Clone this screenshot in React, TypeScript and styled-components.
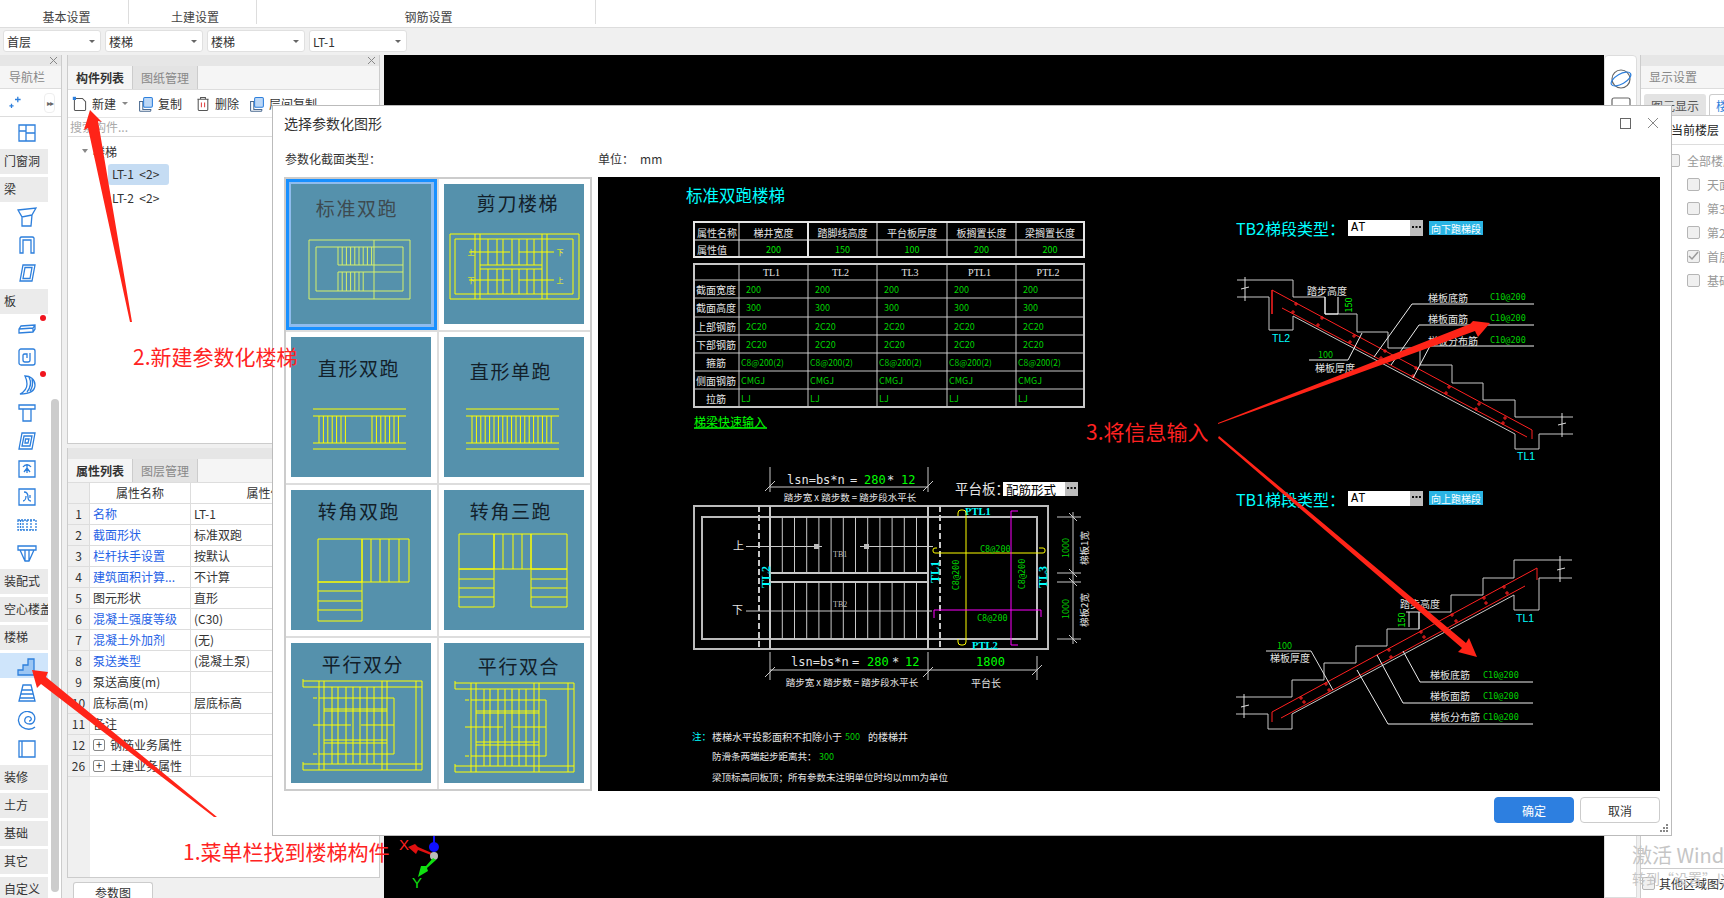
import React from "react";
import styled, { createGlobalStyle } from "styled-components";

const CJK = `"Noto Sans CJK SC", "Liberation Sans", sans-serif`;
const MONO = `'DejaVu Sans Mono', monospace`;
const SERIF = `'Liberation Serif', serif`;
const BLUE = "#2d7fdc";

const Global = createGlobalStyle`
  html, body { margin: 0; padding: 0; height: 100%; overflow: hidden; background: #f0f0f0; }
  #root { height: 100%; }
  * { box-sizing: border-box; }
`;

const Page = styled.div`
  position: relative;
  width: 1724px;
  height: 898px;
  overflow: hidden;
  display: flex;
  flex-direction: column;
  font-family: ${CJK};
  font-size: 12px;
  color: #333;
  background: #f0f0f0;
`;

/* ---------- top ---------- */
const TopTabs = styled.div`
  display: flex;
  height: 28px;
  background: #fff;
  border-bottom: 1px solid #ddd;
`;
const TopTab = styled.div<{ $w: number }>`
  width: ${(p) => p.$w}px;
  height: 24px;
  padding: 8px 0 0 5px;
  line-height: 17px;
  text-align: center;
  border-right: 1px solid #ddd;
  color: #444;
`;
const SelectBar = styled.div`
  display: flex;
  gap: 4px;
  height: 27px;
  padding: 2px 0 0 3px;
  background: #f0f0f0;
`;
const SelectBox = styled.div`
  width: 98px;
  height: 22px;
  padding: 0 3px;
  display: flex;
  align-items: center;
  justify-content: space-between;
  background: #fff;
  border: 1px solid #e0e0e0;
  border-radius: 3px;
  &::after {
    content: "";
    margin-right: 2px;
    border-left: 3px solid transparent;
    border-right: 3px solid transparent;
    border-top: 3px solid #666;
  }
`;

const Main = styled.div`
  flex: 1;
  display: flex;
  min-height: 0;
`;

/* ---------- left navigation ---------- */
const NavPanel = styled.div`
  position: relative;
  width: 62px;
  margin-right: 5px;
  flex: none;
  background: #fff;
  border-right: 1px solid #ccc;
  overflow: hidden;
`;
const CloseBarWrap = styled.div`
  height: 11px;
  flex: none;
  background: #e6e6e6;
  display: flex;
  justify-content: flex-end;
  align-items: center;
  padding-right: 4px;
`;
const CloseBar = ({ x }: { x?: boolean }) => (
  <CloseBarWrap>
    {x && (
      <svg width="7" height="7" viewBox="0 0 7 7" fill="none" stroke="#888">
        <path d="M0 0l7 7M7 0L0 7" />
      </svg>
    )}
  </CloseBarWrap>
);
const NavTitle = styled.div`
  height: 23px;
  padding-left: 9px;
  line-height: 22px;
  color: #888;
  background: #f5f5f5;
  border-bottom: 1px solid #ddd;
`;
const NavTools = styled.div`
  height: 28px;
  display: flex;
  align-items: center;
  justify-content: space-between;
  padding: 1px 6px 0 8px;
  border-bottom: 1px solid #ddd;
`;
const MoreBtn = styled.div`
  width: 11px;
  height: 20px;
  font-size: 8px;
  letter-spacing: -1px;
  line-height: 18px;
  text-align: center;
  color: #666;
  border: 1px solid #eee;
  border-radius: 4px;
`;
const NavList = styled.div`
  display: flex;
  flex-direction: column;
  width: 48px;
  padding-top: 2px;
`;
const NavHead = styled.div`
  flex: none;
  height: 25px;
  margin: 2px 0 1px;
  padding-left: 4px;
  line-height: 24px;
  font-size: 12px;
  white-space: nowrap;
  overflow: hidden;
  background: #ebebeb;
  color: #333;
`;
const NavIconRow = styled.div<{ $sel?: boolean }>`
  flex: none;
  position: relative;
  height: ${(p) => (p.$sel ? 25 : 28)}px;
  margin: ${(p) => (p.$sel ? "2px 0 1px" : 0)};
  display: flex;
  align-items: center;
  justify-content: center;
  padding-left: 6px;
  background: ${(p) => (p.$sel ? "#cfe5fb" : "transparent")};
`;
const RedDot = styled.span`
  position: absolute;
  right: 2px;
  top: 0;
  width: 6px;
  height: 6px;
  border-radius: 50%;
  background: #f0141e;
`;
const NavScroll = styled.div`
  position: absolute;
  left: 51px;
  top: 344px;
  width: 8px;
  height: 493px;
  border-radius: 4px;
  background: #ccc;
`;

/* ---------- list + props column ---------- */
const MidColumn = styled.div`
  width: 313px;
  flex: none;
  display: flex;
  flex-direction: column;
  margin-right: 4px;
`;
const ListPanel = styled.div`
  height: 389px;
  flex: none;
  display: flex;
  flex-direction: column;
  background: #fff;
  border: 1px solid #ccc;
  border-top: 0;
`;
const PanelTabs = styled.div`
  display: flex;
  height: 24px;
  flex: none;
  background: #f5f5f5;
  border-bottom: 1px solid #ddd;
`;
const PanelTab = styled.div<{ $on?: boolean }>`
  width: 65px;
  line-height: 23px;
  text-align: center;
  font-weight: ${(p) => (p.$on ? 700 : 400)};
  color: ${(p) => (p.$on ? "#333" : "#888")};
  background: ${(p) => (p.$on ? "#f5f5f5" : "#e3e3e3")};
  border-right: 1px solid #ccc;
`;
const ListTools = styled.div`
  height: 28px;
  flex: none;
  display: flex;
  align-items: center;
  padding-left: 4px;
  border-bottom: 1px solid #e6e6e6;
`;
const ToolBtn = styled.div<{ $mr: number }>`
  display: flex;
  align-items: center;
  gap: 4px;
  margin-right: ${(p) => p.$mr}px;
  white-space: nowrap;
`;
const Caret = styled.span`
  margin-left: 2px;
  border-left: 3px solid transparent;
  border-right: 3px solid transparent;
  border-top: 3px solid #888;
`;
const SearchRow = styled.div`
  height: 19px;
  flex: none;
  padding-left: 2px;
  line-height: 18px;
  color: #aaa;
  border-bottom: 1px solid #ddd;
`;
const Tree = styled.div`
  display: flex;
  flex-direction: column;
  padding: 2px 0 0 14px;
`;
const TreeRoot = styled.div`
  height: 24px;
  margin-bottom: 1px;
  display: flex;
  align-items: center;
  gap: 5px;
  &::before {
    content: "";
    border-left: 3px solid transparent;
    border-right: 3px solid transparent;
    border-top: 4px solid #888;
  }
`;
const TreeItem = styled.div<{ $on?: boolean }>`
  width: 61px;
  height: 21px;
  margin: 0 0 3px 26px;
  padding-left: 4px;
  line-height: 20px;
  white-space: pre;
  border-radius: 3px;
  background: ${(p) => (p.$on ? "#c5dcf3" : "transparent")};
`;
const PropsPanel = styled.div`
  margin-top: 4px;
  height: 430px;
  flex: none;
  display: flex;
  flex-direction: column;
  background: #fff;
  border: 1px solid #ccc;
  border-top: 0;
`;
const PropsGrid = styled.div`
  flex: 1;
  display: grid;
  grid-template-columns: 22px 101px 148px 1fr;
  grid-auto-rows: 21px;
  align-content: start;
  background: linear-gradient(to right, #f0f0f0 22px, #fff 22px);
`;
const PCell = styled.div<{ $blue?: boolean; $head?: boolean; $num?: boolean }>`
  padding-left: ${(p) => (p.$num || p.$head ? 0 : 3)}px;
  line-height: 20px;
  text-align: ${(p) => (p.$num || p.$head ? "center" : "left")};
  white-space: nowrap;
  overflow: hidden;
  border-right: 1px solid #ddd;
  border-bottom: 1px solid #ddd;
  color: ${(p) => (p.$blue ? "#1f62e6" : "#333")};
  background: ${(p) => (p.$num ? "#f0f0f0" : "#fff")};
  display: flex;
  align-items: center;
  justify-content: ${(p) => (p.$num || p.$head ? "center" : "flex-start")};
  gap: 5px;
`;
const PlusBox = styled.span`
  width: 12px;
  height: 12px;
  flex: none;
  border: 1px solid #888;
  border-radius: 2px;
  line-height: 9px;
  text-align: center;
  font-size: 11px;
`;
const BottomTabs = styled.div`
  flex: 1;
  padding: 4px 0 0 6px;
`;
const ParamTab = styled.div`
  width: 80px;
  height: 17px;
  line-height: 20px;
  overflow: visible;
  text-align: center;
  background: #fff;
  border: 1px solid #ccc;
  border-bottom: 0;
  border-radius: 3px 3px 0 0;
`;

/* ---------- canvas + right ---------- */
const Canvas = styled.div`
  position: relative;
  flex: 1;
  background: #000;
`;
const Gizmo = styled.svg`
  position: absolute;
  left: 1px;
  top: 775px;
`;
const Strip = styled.div`
  width: 33px;
  flex: none;
  margin-right: 3px;
  padding-top: 11px;
  display: flex;
  flex-direction: column;
  align-items: center;
  gap: 6px;
  background: #fff;
  border: 1px solid #ddd;
  border-radius: 4px 4px 0 0;
`;
const RightPanel = styled.div`
  position: relative;
  width: 84px;
  flex: none;
  display: flex;
  flex-direction: column;
  background: #fff;
  border-left: 1px solid #ccc;
  overflow: hidden;
`;
const RightHead = styled.div`
  height: 23px;
  flex: none;
  padding-left: 8px;
  line-height: 22px;
  color: #888;
  background: #f5f5f5;
  border-bottom: 1px solid #ddd;
`;
const RightTabs = styled.div`
  height: 27px;
  flex: none;
  display: flex;
  gap: 3px;
  padding: 5px 0 0 3px;
  border-bottom: 1px solid #ccc;
`;
const RightTab = styled.div<{ $on?: boolean }>`
  width: 62px;
  flex: none;
  line-height: 22px;
  text-align: center;
  white-space: nowrap;
  color: ${(p) => (p.$on ? BLUE : "#555")};
  background: ${(p) => (p.$on ? "#fff" : "#e3e3e3")};
  border: 1px solid ${(p) => (p.$on ? "#ccc" : "#e3e3e3")};
  border-bottom: 0;
  border-radius: 3px 3px 0 0;
`;
const FloorHead = styled.div`
  height: 29px;
  flex: none;
  padding-left: 30px;
  line-height: 28px;
  color: #222;
  border-bottom: 1px solid #ddd;
  white-space: nowrap;
`;
const FloorList = styled.div`
  padding: 8px 0 0 46px;
  display: flex;
  flex-direction: column;
  gap: 10px;
`;
const FloorRow = styled.div<{ $root?: boolean }>`
  height: 14px;
  margin-left: ${(p) => (p.$root ? -20 : 0)}px;
  display: flex;
  align-items: center;
  gap: 7px;
  color: #999;
  white-space: nowrap;
`;
const CheckBox = styled.span`
  width: 13px;
  height: 13px;
  flex: none;
  border: 1px solid #b5b5b5;
  border-radius: 2px;
  background: #f0f0f0;
  display: flex;
  align-items: center;
  justify-content: center;
`;
const OtherRow = styled.div`
  margin-top: auto;
  height: 30px;
  display: flex;
  align-items: center;
  gap: 4px;
  padding: 0 0 0 1px;
  color: #333;
  border-top: 1px solid #ccc;
  white-space: nowrap;
`;
const Watermark = styled.div`
  position: absolute;
  left: 1632px;
  top: 842px;
  color: #c5c5c5;
  font-size: 20px;
  line-height: 26px;
  white-space: nowrap;
  z-index: 5;
  & > small {
    display: block;
    font-size: 14px;
    line-height: 20px;
  }
`;

/* ---------- dialog ---------- */
const Dialog = styled.div`
  position: absolute;
  left: 272px;
  top: 105px;
  width: 1400px;
  height: 731px;
  display: flex;
  flex-direction: column;
  padding: 0 11px 0 11px;
  background: #fff;
  border: 1px solid #bbb;
  z-index: 3;
`;
const DialogHead = styled.div`
  flex: none;
  height: 38px;
  display: flex;
  align-items: center;
  justify-content: space-between;
  font-size: 14px;
  color: #333;
  padding: 0 0 4px 0;
`;
const WinBtns = styled.div`
  display: flex;
  align-items: center;
  gap: 16px;
  margin-right: 1px;
`;
const UnitRow = styled.div`
  flex: none;
  height: 33px;
  display: flex;
  align-items: center;
  font-size: 12px;
  color: #333;
  padding: 0 0 4px 1px;
`;
const UnitLabel = styled.span`
  margin-left: 217px;
  width: 42px;
`;
const DialogBody = styled.div`
  flex: none;
  display: flex;
  gap: 6px;
  height: 614px;
`;
const Grid = styled.div`
  width: 308px;
  height: 614px;
  flex: none;
  display: grid;
  grid-template-columns: 153px 151px;
  grid-template-rows: 153px 153px 153px 151px;
  background: #fff;
  border: 2px solid #ccc;
`;
const ThumbCell = styled.div<{ $col: number; $row: number }>`
  border-right: ${(p) => (p.$col === 0 ? "2px solid #ddd" : "0")};
  border-bottom: ${(p) => (p.$row < 3 ? "2px solid #ddd" : "0")};
`;
const ThumbFrame = styled.div<{ $sel?: boolean }>`
  width: 151px;
  height: 151px;
  padding: ${(p) => (p.$sel ? 2 : 5)}px;
  border: ${(p) => (p.$sel ? "3px solid #1890ff" : "0")};
  background: ${(p) => (p.$sel ? "#8fbcee" : "#fff")};
`;
const ThumbSvg = styled.svg`
  display: block;
  background: #5591ac;
`;
const ThumbTitle = styled.text<{ $dim?: boolean }>`
  font-family: ${CJK};
  font-size: 19px;
  letter-spacing: 1.6px;
  text-anchor: middle;
  fill: ${(p) => (p.$dim ? "#3d4a50" : "#12202a")};
`;
const ThumbMark = styled.text`
  font-family: ${CJK};
  font-size: 7px;
  text-anchor: middle;
  fill: #ffff00;
`;
const Drawing = styled.svg`
  display: block;
  flex: none;
  background: #000;
`;
const CadText = styled.text<{ $c?: string; $s?: number; $b?: boolean; $a?: string; $f?: string }>`
  font-family: ${(p) => p.$f || CJK};
  font-size: ${(p) => p.$s || 10}px;
  font-weight: ${(p) => (p.$b ? 700 : 400)};
  fill: ${(p) => p.$c || "#e4e4e4"};
  text-anchor: ${(p) => p.$a || "start"};
  dominant-baseline: central;
`;
const DialogFoot = styled.div`
  flex: 1;
  display: flex;
  justify-content: flex-end;
  align-items: flex-start;
  gap: 6px;
  padding: 6px 0 0;
`;
const Btn = styled.button<{ $primary?: boolean }>`
  width: 80px;
  height: 26px;
  padding: 0;
  font-family: ${CJK};
  font-size: 12px;
  border-radius: 4px;
  color: ${(p) => (p.$primary ? "#fff" : "#333")};
  background: ${(p) => (p.$primary ? "#2d7fe0" : "#fff")};
  border: 1px solid ${(p) => (p.$primary ? "#2d7fe0" : "#ccc")};
`;
const Grip = styled.svg`
  position: absolute;
  right: 2px;
  bottom: 2px;
`;

/* ---------- annotations ---------- */
const Arrows = styled.svg`
  position: absolute;
  left: 0;
  top: 0;
  z-index: 6;
  pointer-events: none;
`;
const Note = styled.div<{ $x: number; $y: number }>`
  position: absolute;
  left: ${(p) => p.$x}px;
  top: ${(p) => p.$y}px;
  z-index: 7;
  font-size: 21px;
  line-height: 28px;
  color: #ff2222;
  white-space: nowrap;
`;

/* ---------- small icons ---------- */
const S = (p: React.SVGProps<SVGSVGElement> & { size?: number }) => {
  const { size = 20, children, ...rest } = p;
  return (
    <svg width={size} height={size} viewBox="0 0 20 20" fill="none" stroke={BLUE} strokeWidth={1.3} {...rest}>
      {children}
    </svg>
  );
};
const icons: Record<string, React.ReactNode> = {
  window: <path d="M2 2h16v16H2zM9 2v16M9 10h9M2 8h7" />,
  wall: <path d="M1 3l18-2-4 7-1 11H5V10zM1 3l4 7 10-2M5 10v9" />,
  door: <path d="M3 18V3a2 2 0 0 1 2-1h10a2 2 0 0 1 2 1v15h-3V5H6v13z" />,
  slab: <path d="M6 2h12l-3 16H3zM8 4.500h7l-2 11H6z" />,
  plate: <path d="M2 10l2-3 14-1v4l-2 3-14 1zM2 10l14-1 2-3M16 9v4" />,
  spiral: <path d="M4 2h12a2 2 0 0 1 2 2v12a2 2 0 0 1-2 2H4a2 2 0 0 1-2-2V4a2 2 0 0 1 2-2zM13 6v7a2 2 0 0 1-2 2H8a2 2 0 0 1-2-2V8a2 2 0 0 1 2-1h2v4" />,
  arc: <path d="M8 1c5 0 10 3 10 9s-6 9-15 9c4-2 7-5 7-10 0-3-1-6-2-8zM12 2c2 4 2 10-2 15M15 4c1 4 1 8-2 12" />,
  column: <path d="M2 2h16v4H2zM6 6h8v12H6z" />,
  doubleSq: <path d="M5 2h13l-3 16H2zM7 5h8l-2 10H5zM8.500 8h3.500l-1 4H8z" />,
  up: <path d="M2 2h16v16H2zM6 8c2-3 6-3 8 0M10 5v9M7 13l3-4 3 4" />,
  down: <path d="M2 2h16v16H2zM7 5c3 0 4 2 4 5s1 4 3 4M6 14c2 0 3-3 3-5M13 8v3" />,
  beams: <path d="M1 5h18v10H1zM6 5v10M10 5v10M14 5v10M3.500 5v10" strokeDasharray="2 1" />,
  tee: <path d="M1 3h18v4H1zM3 7l5 11h4l5-11M8 7v11M12 7v11" />,
  stair: <path d="M1 19v-5h5V9h5V3h6v16z" fill="#9cc6f3" />,
  trap: <path d="M6 2h8l4 16H2zM5 7h10M4 11h12M3 15h14" />,
  swirl: <path d="M18 16c-3 3-9 3-13 0S0 7 4 3s11-3 13 1 0 9-4 9-6-2-5-5 5-3 6-1-1 3-2 3" />,
  panel: <path d="M2 2h16v16H2zM5 2v16" />,
};
const NavI = ({ n, dot, sel }: { n: string; dot?: boolean; sel?: boolean }) => (
  <NavIconRow $sel={sel}>
    <S>{icons[n]}</S>
    {dot && <RedDot />}
  </NavIconRow>
);

/* ---------- thumbnails ---------- */
type L = [number, number, number, number];
const rect = (x1: number, y1: number, x2: number, y2: number): L[] => [
  [x1, y1, x2, y1],
  [x2, y1, x2, y2],
  [x2, y2, x1, y2],
  [x1, y2, x1, y1],
];
const range = (a: number, n: number, s: number) => Array.from({ length: n }, (_, i) => a + i * s);
const vs = (xs: number[], y1: number, y2: number): L[] => xs.map((x) => [x, y1, x, y2]);
const hs = (ys: number[], x1: number, x2: number): L[] => ys.map((y) => [x1, y, x2, y]);
const parallel = (dx: number, dy: number): L[] =>
  [
    ...hs([38, 44, 121, 127], 12, 131),
    ...vs([125, 131, 28, 33, 91, 96], 38, 127),
    ...vs([41, 47, 55, 62, 69, 76, 83], 44, 121),
    ...hs([55, 111], 28, 103),
    ...hs([82], 22, 60),
    ...hs([82], 70, 103),
    ...hs([66, 68, 97, 100], 33, 96),
    ...vs([12], 36, 44),
    ...vs([12], 119, 127),
    ...hs([55, 111], 22, 26),
    [103, 55, 103, 111] as L,
  ].map(([a, b, c, d]) => [a + dx, b + dy, c + dx, d + dy] as L);

type ThumbData = {
  t: string;
  tx: number;
  ty: number;
  lines: L[];
  stroke?: string;
  dim?: boolean;
  marks?: [string, number, number][];
};
const thumbs: ThumbData[] = [
  {
    t: "标准双跑",
    tx: 66,
    ty: 32,
    dim: true,
    stroke: "#d6f06a",
    lines: [
      ...rect(18, 56, 119, 115),
      ...rect(25, 63, 112, 107),
      [83, 56, 83, 115],
      ...hs([81, 88], 47, 112),
      ...vs(range(47, 9, 4.2), 63, 81),
      ...vs(range(47, 7, 4.2), 88, 107),
    ],
  },
  {
    t: "剪刀楼梯",
    tx: 74,
    ty: 27,
    marks: [
      ["上", 27, 71],
      ["下", 116, 71],
      ["下", 27, 99],
      ["上", 116, 99],
    ],
    lines: [
      ...rect(6, 50, 135, 115),
      ...rect(11, 55, 129, 110),
      ...vs([31, 36, 98, 103], 50, 115),
      ...hs([81, 85], 36, 98),
      ...vs([44, 53, 59, 68, 75, 83, 90], 55, 81),
      ...vs([44, 53, 59, 68, 75, 83, 90], 85, 110),
      ...hs([68, 96], 25, 66),
      ...hs([68, 96], 75, 110),
    ],
  },
  {
    t: "直形双跑",
    tx: 68,
    ty: 39,
    lines: [...hs([72, 79, 106, 112], 22, 115), ...vs(range(28, 7, 4.4), 79, 106), ...vs(range(81, 7, 4.4), 79, 106)],
  },
  {
    t: "直形单跑",
    tx: 67,
    ty: 42,
    lines: [...hs([72, 79, 106, 112], 22, 115), ...vs(range(28, 19, 4.4), 79, 106)],
  },
  {
    t: "转角双跑",
    tx: 68,
    ty: 29,
    lines: [
      ...rect(27, 49, 71, 92),
      ...rect(71, 49, 118, 92),
      ...vs([80, 89, 98, 108], 49, 92),
      ...rect(27, 92, 71, 131),
      ...hs([101, 111, 120], 27, 71),
    ],
  },
  {
    t: "转角三跑",
    tx: 67,
    ty: 29,
    lines: [
      ...rect(15, 44, 50, 79),
      ...rect(50, 44, 87, 79),
      ...rect(87, 44, 123, 79),
      ...vs([59, 69, 78], 44, 79),
      ...rect(15, 79, 50, 117),
      ...rect(87, 79, 123, 117),
      ...hs([89, 98, 107], 15, 50),
      ...hs([89, 98, 107], 87, 123),
    ],
  },
  { t: "平行双分", tx: 72, ty: 29, lines: parallel(0, 0) },
  { t: "平行双合", tx: 75, ty: 31, lines: parallel(-1, 2) },
];

const Thumb = ({ d }: { d: ThumbData }) => (
  <ThumbSvg width={140} height={140} viewBox="0 0 140 140">
    <ThumbTitle x={d.tx} y={d.ty} $dim={d.dim}>
      {d.t}
    </ThumbTitle>
    <g stroke={d.stroke || "#ffff00"} strokeWidth={1} fill="none">
      {d.lines.map(([a, b, c, e], i) => (
        <line key={i} x1={a} y1={b} x2={c} y2={e} />
      ))}
    </g>
    {d.marks?.map(([m, x, y], i) => (
      <ThumbMark key={i} x={x} y={y}>
        {m}
      </ThumbMark>
    ))}
  </ThumbSvg>
);

/* ---------- CAD drawing ---------- */
const colX = [739, 808, 877, 947, 1016, 1084];
const WL = (p: { d: string; c?: string; w?: number; dash?: string }) => (
  <path d={p.d} fill="none" stroke={p.c || "#c8c8c8"} strokeWidth={p.w || 1} strokeDasharray={p.dash} />
);

const Plus = ({ pts }: { pts: number[][] }) => (
  <g stroke="#ff2020" strokeWidth={1}>
    {pts.map(([x, y], i) => (
      <path key={i} d={`M${x - 2} ${y}h4M${x} ${y - 2}v4`} />
    ))}
  </g>
);

const PickBtn = ({ x, y, w, h, dots }: { x: number; y: number; w: number; h: number; dots: number }) => (
  <g>
    <rect x={x} y={y} width={w} height={h} fill="#fff" />
    <rect x={x + w - 13} y={y} width={13} height={h} fill="#bdbdbd" />
    <path
      d={`M${x + w - 11} ${dots}h2v2h-2zM${x + w - 7.5} ${dots}h2v2h-2zM${x + w - 4} ${dots}h2v2h-2z`}
      fill="#111"
    />
  </g>
);

const DrawingSheet = () => {
  const t2rows = [280, 298, 317, 335, 353, 371, 389, 407];
  const rowData: [string, string][] = [
    ["截面宽度", "200"],
    ["截面高度", "300"],
    ["上部钢筋", "2C20"],
    ["下部钢筋", "2C20"],
    ["箍筋", "C8@200(2)"],
    ["侧面钢筋", "CMGJ"],
    ["拉筋", "LJ"],
  ];
  const treads = range(782.3, 12, 12.2);
  return (
    <Drawing width={1062} height={614} viewBox="598 177 1062 614">
      <CadText x={686} y={195} $c="#00ffff" $s={16.500}>
        标准双跑楼梯
      </CadText>

      {/* table 1 */}
      <g stroke="#e6e6e6" fill="none">
        <rect x={694} y={222} width={390} height={35} strokeWidth={2} />
        <path d="M694 240H1084" />
        {colX.slice(0, 5).map((x) => (
          <path key={x} d={`M${x} 222V257`} strokeWidth={x === 808 ? 2 : 1} />
        ))}
      </g>
      <CadText x={697} y={232} $s={10}>属性名称</CadText>
      <CadText x={697} y={249} $s={10}>属性值</CadText>
      {["梯井宽度", "踏脚线高度", "平台板厚度", "板搁置长度", "梁搁置长度"].map((t, i) => (
        <CadText key={t} x={(colX[i] + colX[i + 1]) / 2} y={232} $s={10} $a="middle">{t}</CadText>
      ))}
      {["200", "150", "100", "200", "200"].map((t, i) => (
        <CadText key={i} x={(colX[i] + colX[i + 1]) / 2} y={249} $s={9} $a="middle" $c="#00e000">{t}</CadText>
      ))}

      {/* table 2 */}
      <g stroke="#c8c8c8" fill="none">
        <rect x={694} y={264} width={390} height={143} strokeWidth={2} />
        {t2rows.slice(0, 7).map((y) => (
          <path key={y} d={`M694 ${y}H1084`} />
        ))}
        {colX.slice(0, 5).map((x) => (
          <path key={x} d={`M${x} 264V407`} />
        ))}
      </g>
      {["TL1", "TL2", "TL3", "PTL1", "PTL2"].map((t, i) => (
        <CadText key={t} x={(colX[i] + colX[i + 1]) / 2 - 2} y={272} $s={10} $a="middle" $f={SERIF}>{t}</CadText>
      ))}
      {rowData.map(([lab, v], r) => (
        <g key={lab}>
          <CadText x={716} y={(t2rows[r] + t2rows[r + 1]) / 2} $s={10} $a="middle">{lab}</CadText>
          {colX.slice(0, 5).map((x) => (
            <CadText key={x} x={r < 4 ? x + 7 : x + 2} y={(t2rows[r] + t2rows[r + 1]) / 2} $s={r === 4 ? 8.500 : 9} $c="#00d000">
              {v}
            </CadText>
          ))}
        </g>
      ))}
      <CadText x={694} y={421} $s={12} $c="#00ff00">梯梁快速输入</CadText>
      <path d="M694 428H767" stroke="#00ff00" strokeWidth={1.500} />

      {/* plan */}
      <WL d="M770 467V492M928 467V492M770 487H928M765 491l10-10M923 491l10-10" />
      <CadText x={787} y={480} $s={12} $f={MONO}>lsn=bs*n</CadText>
      <CadText x={850} y={480} $s={12} $f={MONO}>=</CadText>
      <CadText x={864} y={480} $s={12} $c="#00ff00" $f={MONO}>280</CadText>
      <CadText x={887} y={480} $s={12} $f={MONO}>*</CadText>
      <CadText x={901} y={480} $s={12} $c="#00ff00" $f={MONO}>12</CadText>
      <CadText x={850} y={497} $s={9.500} $a="middle">踏步宽 x 踏步数 = 踏步段水平长</CadText>
      <CadText x={955} y={488} $s={13.500}>平台板：</CadText>
      <PickBtn x={1003} y={482} w={75} h={14} dots={487} />
      <CadText x={1006} y={489} $s={12.500} $c="#000">配筋形式</CadText>

      <rect x={694} y={506} width={354} height={143} fill="none" stroke="#bbb" strokeWidth={2} />
      <rect x={702} y={517} width={335} height={122} fill="none" stroke="#bbb" strokeWidth={2} />
      <WL d="M759 506V649M940 506V649" w={2} dash="6 3" />
      <WL d="M770 506V649M928 506V649" w={2} />
      <WL d="M770 573H928M770 582H928" w={2} />
      {treads.map((x) => (
        <WL key={x} d={`M${x} 517V573M${x} 582V639`} />
      ))}
      <WL d="M746 546.500H822M860 546.500H933M746 611H932" />
      <path d="M814 544h5v5h-5zM864 544h5v5h-5z" fill="#bbb" />
      <CadText x={733} y={545} $s={11}>上</CadText>
      <CadText x={732} y={609} $s={11}>下</CadText>
      <CadText x={833} y={554} $s={8} $c="#bbb" $f={SERIF}>TB1</CadText>
      <CadText x={833} y={604} $s={8} $c="#bbb" $f={SERIF}>TB2</CadText>
      {[
        ["TL2", 766, 577],
        ["TL1", 935, 572],
        ["TL3", 1043, 577],
      ].map(([t, x, y]) => (
        <CadText
          key={t as string}
          x={x as number}
          y={y as number}
          $s={12}
          $b
          $c="#00ffff"
          $a="middle"
          $f={SERIF}
          transform={`rotate(-90 ${x} ${y})`}
        >
          {t}
        </CadText>
      ))}
      <CadText x={965} y={511} $s={10.500} $b $c="#00ffff" $f={SERIF}>PTL1</CadText>
      <CadText x={972} y={645} $s={10.500} $b $c="#00ffff" $f={SERIF}>PTL2</CadText>
      <WL d="M958 516v-3a3 3 0 0 1 3-3h2a3 3 0 0 1 3 3V642a3 3 0 0 1-3 3h-2a3 3 0 0 1-3-3v-3" c="#ffff00" />
      <WL d="M937 548h-2a2 2 0 0 0-2 2v1a2 2 0 0 0 2 2H1043a2 2 0 0 0 2-2v-1a2 2 0 0 0-2-2h-4" c="#ffff00" />
      <WL d="M934 618V610H1041V617" c="#ff00ff" />
      <WL d="M1018 511H1011V645H1018" c="#ff00ff" />
      <CadText x={980} y={549} $s={8.500} $c="#00d000" $f={MONO}>C8@200</CadText>
      <CadText x={977} y={618} $s={8.500} $c="#00d000" $f={MONO}>C8@200</CadText>
      <CadText x={956} y={575} $s={8.500} $c="#00d000" $a="middle" $f={MONO} transform="rotate(-90 956 575)">C8@200</CadText>
      <CadText x={1022} y={574} $s={8.500} $c="#00d000" $a="middle" $f={MONO} transform="rotate(-90 1022 574)">C8@200</CadText>

      <WL d="M1057 517H1081M1057 573H1081M1057 582H1081M1057 639H1081M1073 512V644M1069 513l8 8M1069 569l8 8M1069 578l8 8M1069 635l8 8" />
      <CadText x={1065} y={548} $s={9} $c="#00d000" $a="middle" transform="rotate(-90 1065 548)">1000</CadText>
      <CadText x={1065} y={609} $s={9} $c="#00d000" $a="middle" transform="rotate(-90 1065 609)">1000</CadText>
      <CadText x={1084} y={548} $s={9.500} $a="middle" transform="rotate(-90 1084 548)">梯板1宽</CadText>
      <CadText x={1084} y={610} $s={9.500} $a="middle" transform="rotate(-90 1084 610)">梯板2宽</CadText>

      <WL d="M770 652V680M928 652V680M1037 656V680M770 670H1037M765 677l10-10M923 677l10-10M1032 675l10-10" />
      <CadText x={791} y={662} $s={12} $f={MONO}>lsn=bs*n</CadText>
      <CadText x={852} y={662} $s={12} $f={MONO}>=</CadText>
      <CadText x={867} y={662} $s={12} $c="#00ff00" $f={MONO}>280</CadText>
      <CadText x={892} y={662} $s={12} $f={MONO}>*</CadText>
      <CadText x={905} y={662} $s={12} $c="#00ff00" $f={MONO}>12</CadText>
      <CadText x={976} y={662} $s={12} $c="#00ff00" $f={MONO}>1800</CadText>
      <CadText x={852} y={682} $s={9.500} $a="middle">踏步宽 x 踏步数 = 踏步段水平长</CadText>
      <CadText x={971} y={682} $s={10}>平台长</CadText>

      {/* notes */}
      <CadText x={692} y={736} $s={9.500} $c="#00ffff">注：</CadText>
      <CadText x={712} y={736} $s={10}>楼梯水平投影面积不扣除小于</CadText>
      <CadText x={845} y={736} $s={9} $c="#00d000">500</CadText>
      <CadText x={868} y={736} $s={10}>的楼梯井</CadText>
      <CadText x={712} y={756} $s={9.500}>防滑条两端起步距离共：</CadText>
      <CadText x={819} y={756} $s={9} $c="#00d000">300</CadText>
      <CadText x={712} y={777} $s={9.500}>梁顶标高同板顶；所有参数未注明单位时均以mm为单位</CadText>

      {/* TB2 */}
      <CadText x={1236} y={228} $s={16} $c="#00ffff">TB2梯段类型：</CadText>
      <PickBtn x={1348} y={220} w={75} h={16} dots={226} />
      <CadText x={1351} y={228} $s={12} $c="#000" $f="'Liberation Mono', monospace">AT</CadText>
      <rect x={1429} y={221} width={54} height={14} fill="#2ab4e4" />
      <CadText x={1456} y={228} $s={10} $c="#fff" $a="middle">向下跑梯段</CadText>
      <WL d="M1237 280H1293V297H1325V314H1357V332H1388V348H1420V365H1452V383H1483V400H1515V417H1573" />
      <WL d="M1237 297H1269V330H1293V316L1515 434V449H1539V434H1573" />
      <WL d="M1245 277V301M1562 413V437M1241 289l8-2M1558 425l8-2" c="#ddd" />
      <WL d="M1325 297V314H1338M1338 297V314" c="#fff" />
      <WL d="M1272 290L1532 430V439M1282 308L1527 437" c="#ff2020" />
      <WL d="M1272 290V314" c="#ff2020" w={1.500} />
      <Plus pts={[[1296, 304], [1322, 318], [1354, 336], [1385, 351], [1416, 368], [1449, 387], [1479, 404], [1505, 418], [1293, 312], [1318, 325], [1350, 342], [1381, 358], [1413, 376], [1446, 393], [1476, 409], [1503, 423]]} />
      <CadText x={1307} y={290} $s={10}>踏步高度</CadText>
      <CadText x={1348} y={305} $s={9} $c="#00ff00" $a="middle" transform="rotate(-90 1348 305)">150</CadText>
      <CadText x={1318} y={354} $s={9} $c="#00d000">100</CadText>
      <WL d="M1309 360H1348L1362 333" c="#eee" />
      <CadText x={1315} y={367} $s={10}>梯板厚度</CadText>
      <CadText x={1272} y={338} $s={10.500} $c="#00ffff" $f="'Liberation Sans', sans-serif">TL2</CadText>
      <CadText x={1517} y={456} $s={10.500} $c="#00ffff" $f="'Liberation Sans', sans-serif">TL1</CadText>
      {[
        ["梯板底筋", 297, "M1534 304H1412L1374 357"],
        ["梯板面筋", 318, "M1534 325H1419L1391 365"],
        ["梯板分布筋", 340, "M1534 346H1430L1413 378"],
      ].map(([t, y, d]) => (
        <g key={t as string}>
          <CadText x={1428} y={y as number} $s={10}>{t}</CadText>
          <CadText x={1490} y={y as number} $s={8.500} $c="#00d000" $f={MONO}>C10@200</CadText>
          <WL d={d as string} c="#eee" />
        </g>
      ))}

      {/* TB1 */}
      <CadText x={1236} y={499} $s={16} $c="#00ffff">TB1梯段类型：</CadText>
      <PickBtn x={1348} y={491} w={75} h={15} dots={496} />
      <CadText x={1351} y={499} $s={12} $c="#000" $f="'Liberation Mono', monospace">AT</CadText>
      <rect x={1429} y={491} width={54} height={14} fill="#2ab4e4" />
      <CadText x={1456} y={498} $s={10} $c="#fff" $a="middle">向上跑梯段</CadText>
      <WL d="M1236 697H1292V680H1324V663H1356V646H1387V629H1419V612H1451V595H1483V578H1514V560H1572" />
      <WL d="M1236 714H1268V729H1292V714L1514 595V610H1539V578H1572" />
      <WL d="M1244 694V718M1560 556V582M1241 707l8-2M1557 570l8-2" c="#ddd" />
      <WL d="M1406 612H1419V629M1409 612V627" c="#ddd" />
      <WL d="M1272 722V712L1537 568V580M1281 718L1525 586" c="#ff2020" />
      <Plus pts={[[1301, 698], [1326, 684], [1389, 650], [1421, 632], [1452, 615], [1484, 598], [1504, 587], [1304, 702], [1329, 690], [1391, 657], [1424, 637], [1456, 621], [1486, 603], [1507, 593]]} />
      <CadText x={1400} y={603} $s={10}>踏步高度</CadText>
      <CadText x={1401} y={620} $s={9} $c="#00ff00" $a="middle" transform="rotate(-90 1401 620)">150</CadText>
      <CadText x={1277} y={645} $s={9} $c="#00d000">100</CadText>
      <WL d="M1266 651H1311L1333 690" c="#ddd" />
      <CadText x={1270} y={657} $s={10}>梯板厚度</CadText>
      <CadText x={1516} y={618} $s={10.500} $c="#00ffff" $f="'Liberation Sans', sans-serif">TL1</CadText>
      {[
        ["梯板底筋", 674, "M1533 682H1420L1403 651"],
        ["梯板面筋", 695, "M1533 703H1403L1377 655"],
        ["梯板分布筋", 716, "M1533 724H1388L1357 670"],
      ].map(([t, y, d]) => (
        <g key={t as string}>
          <CadText x={1430} y={y as number} $s={10}>{t}</CadText>
          <CadText x={1483} y={(y as number) + 1} $s={8.500} $c="#00d000" $f={MONO}>C10@200</CadText>
          <WL d={d as string} c="#eee" />
        </g>
      ))}
    </Drawing>
  );
};

const propRows: [string, string, string, boolean][] = [
  ["1", "名称", "LT-1", true],
  ["2", "截面形状", "标准双跑", true],
  ["3", "栏杆扶手设置", "按默认", true],
  ["4", "建筑面积计算...", "不计算", true],
  ["5", "图元形状", "直形", false],
  ["6", "混凝土强度等级", "(C30)", true],
  ["7", "混凝土外加剂", "(无)", true],
  ["8", "泵送类型", "(混凝土泵)", true],
  ["9", "泵送高度(m)", "", false],
  ["10", "底标高(m)", "层底标高", false],
  ["11", "备注", "", false],
];

const CopyIcon = () => (
  <S size={16} stroke="#4a6a90">
    <path d="M2 7h4v10h10v1a1 1 0 0 1-1 1H3a1 1 0 0 1-1-1z" />
    <rect x="7" y="2" width="11" height="12" rx="1.500" fill="#bcd8f7" stroke={BLUE} />
  </S>
);

export default function App() {
  return (
    <Page>
      <Global />
      <TopTabs>
        <TopTab $w={129}>基本设置</TopTab>
        <TopTab $w={128}>土建设置</TopTab>
        <TopTab $w={339}>钢筋设置</TopTab>
      </TopTabs>
      <SelectBar>
        {["首层", "楼梯", "楼梯", "LT-1"].map((s, i) => (
          <SelectBox key={i}>{s}</SelectBox>
        ))}
      </SelectBar>
      <Main>
        <NavPanel>
          <CloseBar x />
          <NavTitle>导航栏</NavTitle>
          <NavTools>
            <S size={14}>
              <path d="M2 14h6M5 11v6M10 5h8M14 1v8" strokeWidth={1.800} />
            </S>
            <MoreBtn>▸▸</MoreBtn>
          </NavTools>
          <NavList>
            <NavI n="window" />
            <NavHead>门窗洞</NavHead>
            <NavHead>梁</NavHead>
            <NavI n="wall" />
            <NavI n="door" />
            <NavI n="slab" />
            <NavHead>板</NavHead>
            <NavI n="plate" dot />
            <NavI n="spiral" />
            <NavI n="arc" dot />
            <NavI n="column" />
            <NavI n="doubleSq" />
            <NavI n="up" />
            <NavI n="down" />
            <NavI n="beams" />
            <NavI n="tee" />
            <NavHead>装配式</NavHead>
            <NavHead>空心楼盖</NavHead>
            <NavHead>楼梯</NavHead>
            <NavI n="stair" sel />
            <NavI n="trap" />
            <NavI n="swirl" />
            <NavI n="panel" />
            <NavHead>装修</NavHead>
            <NavHead>土方</NavHead>
            <NavHead>基础</NavHead>
            <NavHead>其它</NavHead>
            <NavHead>自定义</NavHead>
          </NavList>
          <NavScroll />
        </NavPanel>

        <MidColumn>
          <ListPanel>
            <CloseBar x />
            <PanelTabs>
              <PanelTab $on>构件列表</PanelTab>
              <PanelTab>图纸管理</PanelTab>
            </PanelTabs>
            <ListTools>
              <ToolBtn $mr={10}>
                <S size={16} stroke="#555">
                  <path d="M3 3h10l4 4v10a1 1 0 0 1-1 1H4a1 1 0 0 1-1-1z" />
                  <path d="M1 1h4v4H1z" fill={BLUE} stroke="none" />
                </S>
                新建
                <Caret />
              </ToolBtn>
              <ToolBtn $mr={13}>
                <CopyIcon />
                复制
              </ToolBtn>
              <ToolBtn $mr={10}>
                <S size={16} stroke="#555">
                  <path d="M3 4h14M7 4V2h6v2M4 4v13a1 1 0 0 0 1 1h10a1 1 0 0 0 1-1V4" />
                  <path d="M8 8v6M12 8v6" stroke="#e04040" />
                </S>
                删除
              </ToolBtn>
              <ToolBtn $mr={0}>
                <CopyIcon />
                层间复制
              </ToolBtn>
            </ListTools>
            <SearchRow>搜索构件...</SearchRow>
            <Tree>
              <TreeRoot>楼梯</TreeRoot>
              <TreeItem $on>{"LT-1  <2>"}</TreeItem>
              <TreeItem>{"LT-2  <2>"}</TreeItem>
            </Tree>
          </ListPanel>
          <PropsPanel>
            <CloseBar />
            <PanelTabs>
              <PanelTab $on>属性列表</PanelTab>
              <PanelTab>图层管理</PanelTab>
            </PanelTabs>
            <PropsGrid>
              <PCell $num />
              <PCell $head>属性名称</PCell>
              <PCell $head>属性值</PCell>
              <PCell $head />
              {propRows.map(([n, a, b, blue]) => (
                <React.Fragment key={n}>
                  <PCell $num>{n}</PCell>
                  <PCell $blue={blue}>{a}</PCell>
                  <PCell>{b}</PCell>
                  <PCell />
                </React.Fragment>
              ))}
              {[
                ["12", "钢筋业务属性"],
                ["26", "土建业务属性"],
              ].map(([n, a]) => (
                <React.Fragment key={n}>
                  <PCell $num>{n}</PCell>
                  <PCell>
                    <PlusBox>+</PlusBox>
                    {a}
                  </PCell>
                  <PCell />
                  <PCell />
                </React.Fragment>
              ))}
            </PropsGrid>
          </PropsPanel>
          <BottomTabs>
            <ParamTab>参数图</ParamTab>
          </BottomTabs>
        </MidColumn>

        <Canvas>
          <Gizmo width={70} height={68} viewBox="0 0 70 68">
            <path d="M47 23L33 17l-3-3-7 3 8 7 2-4 13 5z" fill="#e01010" />
            <path d="M49 12a5 5 0 1 1-.1 0zM48 4h2v10h-2z" fill="#1010ff" />
            <circle cx={49} cy={26} r={4} fill="#bbb" />
            <path d="M48 28L41 36l-5 0-3 11 10-6-1-3 9-8z" fill="#10e010" />
            <text x="14" y="20" fontSize="15" fill="#ff2020" fontFamily="Liberation Sans">X</text>
            <text x="27" y="58" fontSize="15" fill="#10e010" fontFamily="Liberation Sans">Y</text>
          </Gizmo>
        </Canvas>

        <Strip>
          <svg width="24" height="24" viewBox="0 0 24 24" fill="none" strokeWidth="1.200">
            <circle cx="12" cy="12" r="9" stroke="#666" />
            <ellipse cx="12" cy="12" rx="11" ry="5" stroke={BLUE} transform="rotate(-30 12 12)" />
          </svg>
          <svg width="20" height="20" viewBox="0 0 20 20" fill="none" stroke="#666" strokeWidth="1.200">
            <rect x="1" y="1" width="18" height="18" rx="2" />
          </svg>
        </Strip>

        <RightPanel>
          <CloseBar />
          <RightHead>显示设置</RightHead>
          <RightTabs>
            <RightTab>图元显示</RightTab>
            <RightTab $on>楼层显示</RightTab>
          </RightTabs>
          <FloorHead>当前楼层</FloorHead>
          <FloorList>
            <FloorRow $root>
              <CheckBox />全部楼层
            </FloorRow>
            {["天面", "第3层", "第2层", "首层", "基础层"].map((f) => (
              <FloorRow key={f}>
                <CheckBox>
                  {f === "首层" && (
                    <svg width="11" height="11" viewBox="0 0 11 11" fill="none" stroke="#999" strokeWidth="1.500">
                      <path d="M1 5l3 3 6-7" />
                    </svg>
                  )}
                </CheckBox>
                {f}
              </FloorRow>
            ))}
          </FloorList>
          <OtherRow>
            <CheckBox />
            其他区域图元
          </OtherRow>
        </RightPanel>
      </Main>

      <Watermark>
        激活 Windows
        <small>转到“设置”以激活 Windows。</small>
      </Watermark>

      <Dialog>
        <DialogHead>
          选择参数化图形
          <WinBtns>
            <svg width="11" height="11" viewBox="0 0 11 11" fill="none" stroke="#666">
              <rect x=".5" y=".5" width="10" height="10" />
            </svg>
            <svg width="12" height="12" viewBox="0 0 12 12" fill="none" stroke="#888">
              <path d="M1 1l10 10M11 1L1 11" />
            </svg>
          </WinBtns>
        </DialogHead>
        <UnitRow>
          参数化截面类型：
          <UnitLabel>单位：</UnitLabel>
          mm
        </UnitRow>
        <DialogBody>
          <Grid>
            {thumbs.map((d, i) => (
              <ThumbCell key={d.t} $col={i % 2} $row={Math.floor(i / 2)}>
                <ThumbFrame $sel={i === 0}>
                  <Thumb d={d} />
                </ThumbFrame>
              </ThumbCell>
            ))}
          </Grid>
          <DrawingSheet />
        </DialogBody>
        <DialogFoot>
          <Btn $primary>确定</Btn>
          <Btn>取消</Btn>
        </DialogFoot>
        <Grip width="9" height="9" viewBox="0 0 9 9" fill="#888">
          <path d="M6 0h2v2H6zM3 3h2v2H3zM6 3h2v2H6zM0 6h2v2H0zM3 6h2v2H3zM6 6h2v2H6z" />
        </Grip>
      </Dialog>

      <Arrows width={1724} height={898} viewBox="0 0 1724 898" fill="#ff2418">
        <path d="M32 670L48 672L46 677L217 817L214 817L41 684L37 688z" />
        <path d="M90 110L102 122L98 121L132 322L130 322L88 128L84 130z" />
        <path d="M1490 323L1478 337L1475 331L1218 424L1218 423L1470 324L1473 321z" />
        <path d="M1477 657L1458 652L1462 648L1218 438L1219 436L1466 643L1469 638z" />
      </Arrows>
      <Note $x={133} $y={342}>2.新建参数化楼梯</Note>
      <Note $x={183} $y={837}>1.菜单栏找到楼梯构件</Note>
      <Note $x={1086} $y={417}>3.将信息输入</Note>
    </Page>
  );
}
